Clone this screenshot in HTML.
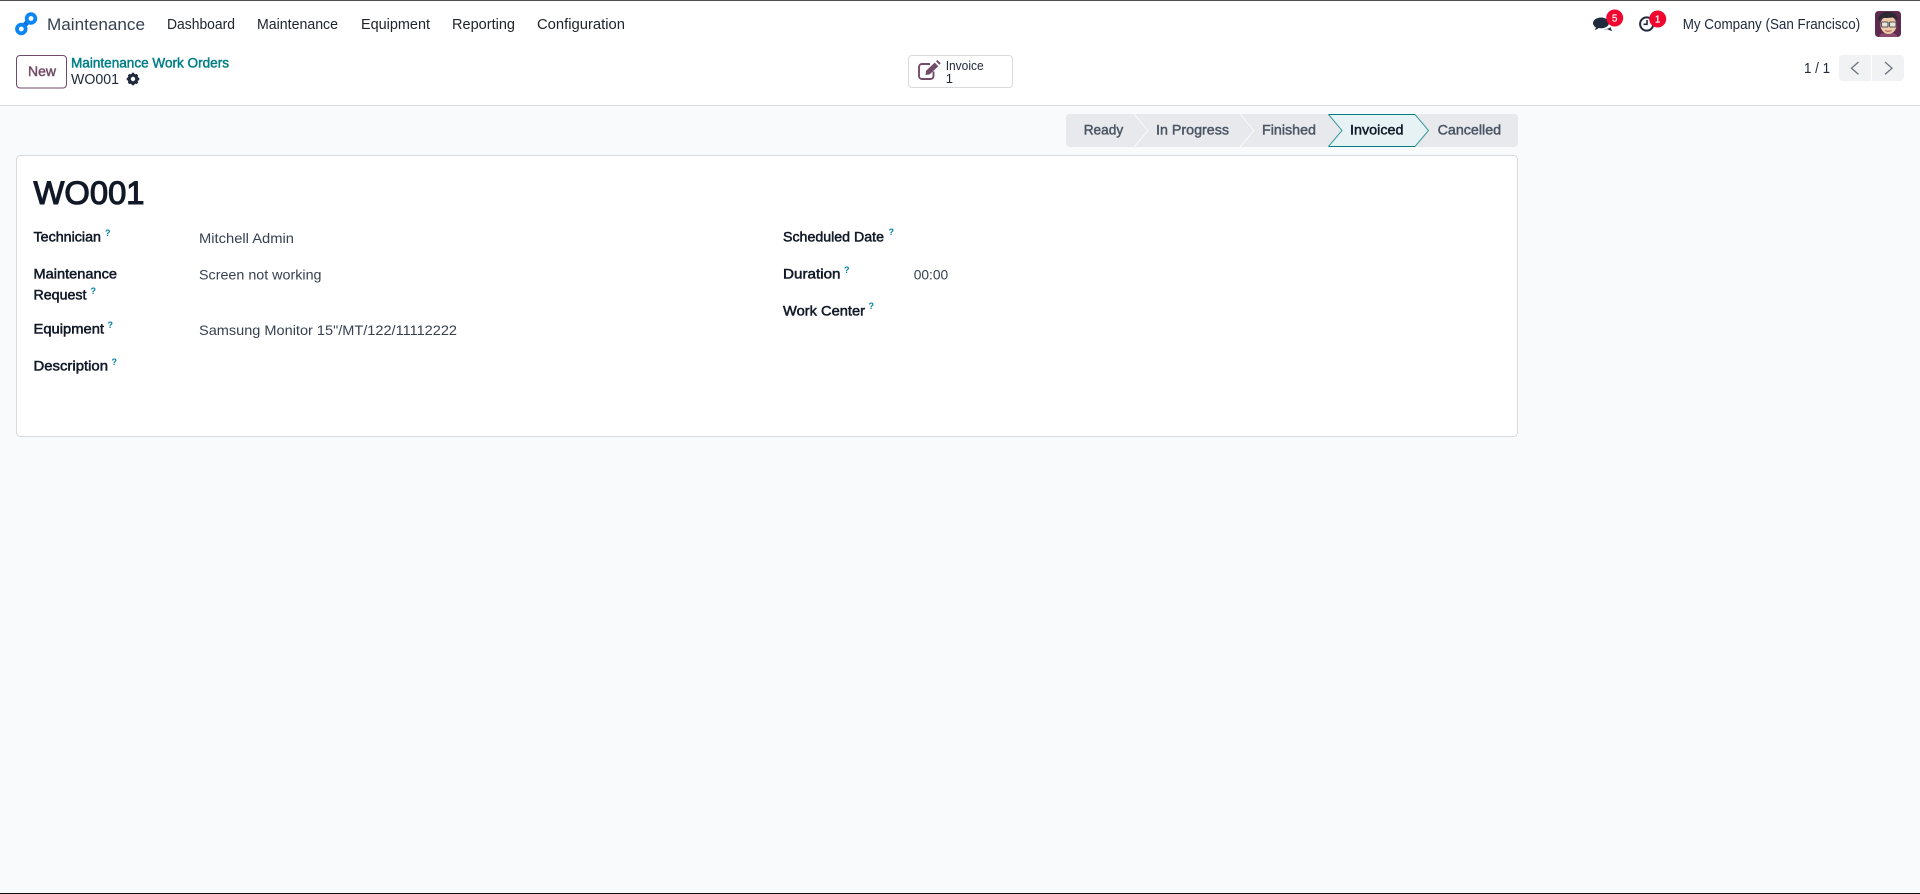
<!DOCTYPE html>
<html lang="en">
<head>
<meta charset="utf-8">
<title>WO001 - Maintenance Work Orders</title>
<style>
html,body{margin:0;padding:0;width:1920px;height:894px;overflow:hidden;background:#f9fafb}
svg{position:absolute;left:0;top:0;display:block}
text{font-family:"Liberation Sans",Arial,sans-serif;font-size:14px;fill:#374151;white-space:pre}
.nav{fill:#212529;font-size:14.5px}
.lab{fill:#111827;font-size:14px;stroke:#111827;stroke-width:.5px}
.val{fill:#374151;font-size:14px}
.q{fill:#0180a5;font-weight:700;font-size:9px}
.st{fill:#4b5563;font-size:14px;stroke:#4b5563;stroke-width:.45px}
</style>
</head>
<body>
<svg width="1920" height="894" viewBox="0 0 1920 894" xmlns="http://www.w3.org/2000/svg">
  <rect width="1920" height="894" fill="#f9fafb"/>
  <!-- header -->
  <rect width="1920" height="105" fill="#ffffff"/>
  <rect y="105" width="1920" height="1" fill="#d8dadd"/>
  <rect width="1920" height="1" fill="#4f4f4f"/>
  <rect y="893" width="1920" height="1" fill="#111111"/>

  <!-- logo -->
  <path d="M21.3 28.500 L31 18.500" stroke="#0f6fd6" stroke-width="5" fill="none"/>
  <circle cx="31" cy="18.500" r="6.200" fill="#0d86f5"/>
  <circle cx="21.300" cy="29" r="6.200" fill="#0d86f5"/>
  <circle cx="31" cy="18.500" r="2.400" fill="#fff"/>
  <circle cx="21.300" cy="29" r="2.400" fill="#fff"/>

  <text x="47" y="30" textLength="98" lengthAdjust="spacingAndGlyphs" style="font-size:17px;fill:#374151">Maintenance</text>
  <text class="nav" x="167" y="29" textLength="68" lengthAdjust="spacingAndGlyphs">Dashboard</text>
  <text class="nav" x="257" y="29" textLength="81" lengthAdjust="spacingAndGlyphs">Maintenance</text>
  <text class="nav" x="361" y="29" textLength="69" lengthAdjust="spacingAndGlyphs">Equipment</text>
  <text class="nav" x="452" y="29" textLength="63" lengthAdjust="spacingAndGlyphs">Reporting</text>
  <text class="nav" x="537" y="29" textLength="88" lengthAdjust="spacingAndGlyphs">Configuration</text>

  <!-- systray -->
  <path d="M1601 17.500c-4.400 0-8 2.500-8 5.600 0 1.800 1.200 3.400 3 4.400-.3 1-.9 1.900-1.500 2.500 1.500-.2 3-1 4.200-2 .8.200 1.500.3 2.300.3 4.400 0 8-2.400 8-5.200 0-3.100-3.600-5.600-8-5.600z" fill="#1f2a3c"/>
  <path d="M1604 29.200c2.500.1 5-.6 6.500-2.200.4 1.500 1 3 1.800 4-1.800-.2-3.300-.8-4.500-1.700-1.300.3-2.600.2-3.800-.1z" fill="#1f2a3c"/>
  <circle cx="1614.700" cy="18" r="8.500" fill="#f0062f"/>
  <text x="1614.700" y="21.500" text-anchor="middle" style="font-size:10px;fill:#fff;stroke:#fff;stroke-width:.2px">5</text>
  <circle cx="1646.700" cy="24" r="6.600" fill="none" stroke="#1f2a3c" stroke-width="2"/>
  <path d="M1647 20v4.300h-3.500" fill="none" stroke="#1f2a3c" stroke-width="1.600"/>
  <circle cx="1657.700" cy="19" r="8.500" fill="#f0062f"/>
  <text x="1657.700" y="22.500" text-anchor="middle" style="font-size:10px;fill:#fff;stroke:#fff;stroke-width:.2px">1</text>
  <text x="1682.700" y="29" textLength="177.500" lengthAdjust="spacingAndGlyphs" style="font-size:14.500px;fill:#212b3a">My Company (San Francisco)</text>

  <!-- avatar -->
  <rect x="1875" y="11" width="26" height="26" rx="3.500" fill="#5e2a4f"/>
  <path d="M1879 37c.5-3 3.500-4.500 9-4.500s9 1.500 9.500 4.500z" fill="#8a4a6c"/>
  <ellipse cx="1888.500" cy="25" rx="8" ry="9" fill="#f0c9a8"/>
  <path d="M1878.500 22c-1.500-6 3-10 10-10 6 0 10 3 9 9-1-2-2.500-3.500-5-3.500-3 .5-8 .5-10 .5-1.500.5-3 2-4 4z" fill="#2a2a30"/>
  <rect x="1881.500" y="22" width="6.500" height="5" rx="1" fill="#e8e4da" stroke="#55565a" stroke-width="1.100"/>
  <rect x="1889.500" y="22" width="6.500" height="5" rx="1" fill="#e8e4da" stroke="#55565a" stroke-width="1.100"/>
  <path d="M1885 30.500c1.500 1 5 1 6.500 0" stroke="#a0584f" stroke-width="1" fill="none"/>

  <!-- control panel -->
  <rect x="16.500" y="55.500" width="50" height="32.500" rx="3.500" fill="#fff" stroke="#714b67"/>
  <text x="28" y="76" textLength="28" lengthAdjust="spacingAndGlyphs" style="font-size:14px;fill:#714b67;stroke:#714b67;stroke-width:.45px">New</text>
  <text x="71" y="67.500" textLength="158" lengthAdjust="spacingAndGlyphs" style="font-size:13.500px;fill:#017e84;stroke:#017e84;stroke-width:.45px">Maintenance Work Orders</text>
  <text x="71" y="84" textLength="48" lengthAdjust="spacingAndGlyphs" style="font-size:14.500px;fill:#212b3a">WO001</text>
  <!-- gear -->
  <g transform="translate(133 79)" fill="#1f2a3c">
    <circle r="3.800" fill="none" stroke="#1f2a3c" stroke-width="3.200"/>
    <g stroke="#1f2a3c" stroke-width="2.400">
      <path d="M0-6.300V-4M0 4V6.300M-6.300 0H-4M4 0H6.300M-4.400-4.400-2.800-2.800M4.400 4.400 2.800 2.800M-4.400 4.400-2.800 2.800M4.400-4.400 2.800-2.800"/>
    </g>
  </g>

  <!-- invoice smart button -->
  <rect x="908.500" y="55.500" width="104" height="32" rx="3.500" fill="#fff" stroke="#d8dadd"/>
  <path d="M933.500 71.500v4.500a3 3 0 0 1-3 3h-8.500a3 3 0 0 1-3-3v-9a3 3 0 0 1 3-3h8" fill="none" stroke="#714b67" stroke-width="1.900"/>
  <path d="M925.500 75l.6-4.200 8.600-8.200 3.600 3.600-8.600 8.200z" fill="#714b67"/>
  <path d="M936 61.300l1.400-1.300 3.300 3.300-1.400 1.400z" fill="#714b67"/>
  <text x="945.700" y="70" textLength="38" lengthAdjust="spacingAndGlyphs" style="font-size:13px;fill:#212b3a">Invoice</text>
  <text x="945.700" y="83" style="font-size:13px;fill:#212b3a">1</text>

  <!-- pager -->
  <text x="1804" y="73" textLength="26" lengthAdjust="spacingAndGlyphs" style="font-size:14.500px;fill:#212b3a">1 / 1</text>
  <path d="M1843 55h28v26h-28a4 4 0 0 1-4-4v-18a4 4 0 0 1 4-4z" fill="#f1f2f4"/>
  <path d="M1872 55h28a4 4 0 0 1 4 4v18a4 4 0 0 1-4 4h-28z" fill="#f1f2f4"/>
  <path d="M1858.500 62l-7 6.200 7 6.200" fill="none" stroke="#6b7280" stroke-width="1.300"/>
  <path d="M1885 62l7 6.200-7 6.200" fill="none" stroke="#6b7280" stroke-width="1.300"/>

  <!-- status bar -->
  <rect x="1066" y="114" width="452" height="33" rx="4" fill="#e7e9ed"/>
  <path d="M1134 114l14 16.500-14 16.500" fill="none" stroke="#f9fafb" stroke-width="1"/>
  <path d="M1240 114l14 16.500-14 16.500" fill="none" stroke="#f9fafb" stroke-width="1"/>
  <path d="M1328.500 114.500H1415l13.500 16-13.500 16H1328.500l13.500-16z" fill="#e6f2f3"/>
  <path d="M1328.500 114.500H1415M1328.500 146.500H1415" fill="none" stroke="#017e84" stroke-width="1"/>
  <path d="M1328.500 114.500l13.500 16-13.500 16M1415 114.500l13.500 16-13.500 16" fill="none" stroke="#017e84" stroke-opacity=".75" stroke-width="1"/>
  <text class="st" x="1083.700" y="134.500" textLength="39.500" lengthAdjust="spacingAndGlyphs">Ready</text>
  <text class="st" x="1156" y="134.500" textLength="73" lengthAdjust="spacingAndGlyphs">In Progress</text>
  <text class="st" x="1262" y="134.500" textLength="54" lengthAdjust="spacingAndGlyphs">Finished</text>
  <text class="st" x="1350" y="134.500" textLength="53.500" lengthAdjust="spacingAndGlyphs" style="fill:#111827;stroke:#111827">Invoiced</text>
  <text class="st" x="1437.600" y="134.500" textLength="63.500" lengthAdjust="spacingAndGlyphs">Cancelled</text>

  <!-- card -->
  <rect x="16.500" y="155.500" width="1501" height="281" rx="4" fill="#fff" stroke="#d8dadd"/>
  <text x="33.500" y="204" textLength="111" lengthAdjust="spacingAndGlyphs" style="font-size:32px;fill:#111827;stroke:#111827;stroke-width:1.100px">WO001</text>

  <text class="lab" x="33.500" y="241.500" textLength="67.500" lengthAdjust="spacingAndGlyphs">Technician</text>
  <text class="q" x="105" y="236">?</text>
  <text class="val" x="199" y="243" textLength="95" lengthAdjust="spacingAndGlyphs">Mitchell Admin</text>

  <text class="lab" x="33.500" y="278.500" textLength="83.500" lengthAdjust="spacingAndGlyphs">Maintenance</text>
  <text class="lab" x="33.500" y="299.500" textLength="53" lengthAdjust="spacingAndGlyphs">Request</text>
  <text class="q" x="90.500" y="294">?</text>
  <text class="val" x="199" y="279.500" textLength="122.500" lengthAdjust="spacingAndGlyphs">Screen not working</text>

  <text class="lab" x="33.500" y="333.500" textLength="70.500" lengthAdjust="spacingAndGlyphs">Equipment</text>
  <text class="q" x="107.500" y="328">?</text>
  <text class="val" x="199" y="335" textLength="258" lengthAdjust="spacingAndGlyphs">Samsung Monitor 15"/MT/122/11112222</text>

  <text class="lab" x="33.500" y="370.500" textLength="74.500" lengthAdjust="spacingAndGlyphs">Description</text>
  <text class="q" x="111.500" y="365">?</text>

  <text class="lab" x="783" y="241.500" textLength="101" lengthAdjust="spacingAndGlyphs">Scheduled Date</text>
  <text class="q" x="888.500" y="235">?</text>
  <text class="lab" x="783" y="278.500" textLength="57.500" lengthAdjust="spacingAndGlyphs">Duration</text>
  <text class="q" x="844" y="273">?</text>
  <text class="val" x="913.700" y="279.500" textLength="34.500" lengthAdjust="spacingAndGlyphs">00:00</text>
  <text class="lab" x="783" y="315.500" textLength="82" lengthAdjust="spacingAndGlyphs">Work Center</text>
  <text class="q" x="868.500" y="309">?</text>
</svg>
</body>
</html>
